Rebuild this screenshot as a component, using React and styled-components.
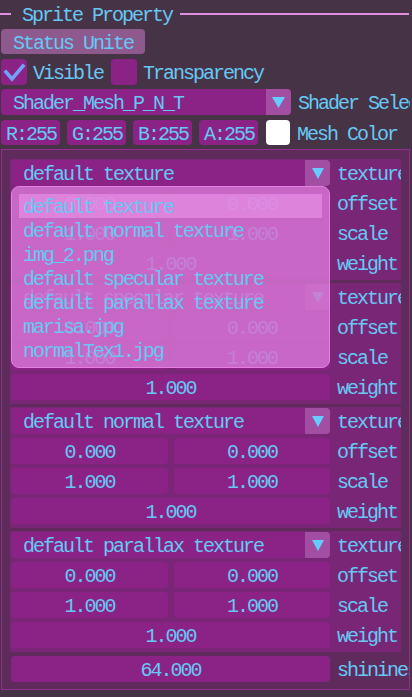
import React from 'react';
import styled, { createGlobalStyle } from 'styled-components';

const Global = createGlobalStyle`
  html, body {
    margin: 0;
    padding: 0;
    background: #463346;
  }
  body {
    font-family: "Liberation Mono", "DejaVu Sans Mono", monospace;
    font-size: 20px;
    letter-spacing: -2px;
    color: #66c8f4;
    line-height: 1;
  }
`;

const Window = styled.div`
  width: 410px;
  height: 697px;
  box-sizing: border-box;
  padding-left: 1px;
  overflow: hidden;
`;

const Separator = styled.div`
  display: flex;
  align-items: center;
  height: 27px;
  margin-left: -1px;
`;

const Line = styled.div`
  height: 2px;
  background: #e08ee0;
  width: ${(p) => (p.$grow ? 'auto' : `${p.$w}px`)};
  flex: ${(p) => (p.$grow ? 1 : 'none')};
  margin-right: ${(p) => (p.$grow ? '1px' : '0')};
`;

const Title = styled.span`
  margin: 0 8px 0 11px;
  padding-top: 4px;
  white-space: nowrap;
`;

const Button = styled.div`
  display: flex;
  align-items: center;
  width: 144px;
  height: 25px;
  margin-top: 2px;
  box-sizing: border-box;
  padding: 4px 0 0 12px;
  background: #8e5a8e;
  border-radius: 4px;
  white-space: nowrap;
`;

const Row = styled.div`
  display: flex;
  align-items: center;
  gap: ${(p) => p.$gap ?? 7}px;
  margin-top: ${(p) => p.$mt ?? 4}px;
  white-space: nowrap;
`;

const CheckBox = styled.div`
  flex: none;
  width: 26px;
  height: 26px;
  border-radius: 4px;
  background: #8b2387;
  margin-left: ${(p) => p.$ml ?? 0}px;
  display: flex;
`;

const Label = styled.span`
  white-space: nowrap;
  padding-top: 4px;
`;

const Combo = styled.div`
  flex: none;
  display: flex;
  align-items: stretch;
  width: ${(p) => p.$w}px;
  height: 26px;
  border-radius: 4px;
  background: #8b2387;
  overflow: hidden;
`;

const ComboText = styled.div`
  flex: 1;
  display: flex;
  align-items: center;
  padding: 4px 0 0 12px;
  white-space: nowrap;
  overflow: hidden;
`;

const ArrowBox = styled.div`
  flex: none;
  width: 25px;
  display: flex;
  align-items: center;
  justify-content: center;
  background: #a14ea3;
`;

const ColorField = styled.div`
  flex: none;
  width: 59px;
  height: 25px;
  box-sizing: border-box;
  padding: 4px 0 0 5px;
  display: flex;
  align-items: center;
  border-radius: 4px;
  background: #8b2387;
`;

const Swatch = styled.div`
  flex: none;
  width: 24px;
  height: 25px;
  margin-left: 1px;
  border-radius: 4px;
  background: #ffffff;
`;

const Child = styled.div`
  margin-top: 4px;
  width: 409px;
  box-sizing: border-box;
  border: 1px solid #93308f;
  background: #5f2b5d;
  padding: 9px 8px 7px 8px;
  display: flex;
  flex-direction: column;
  gap: 3px;
  overflow: hidden;
`;

const Group = styled.div`
  background: #7a2676;
  padding: 1px 0 4px 1px;
  display: flex;
  flex-direction: column;
  gap: 4px;
`;

const GroupRow = styled.div`
  display: grid;
  grid-template-columns: 319px ${(p) => (p.$free ? '80px' : '64px')};
  column-gap: 7px;
  align-items: center;
  margin-left: ${(p) => p.$ml ?? 0}px;
  margin-top: ${(p) => p.$mt ?? 0}px;
`;

const RowLabel = styled.div`
  overflow: hidden;
  white-space: nowrap;
  padding-top: 4px;
`;

const ComboWrap = styled.div`
  position: relative;
  width: 319px;
`;

const Pair = styled.div`
  display: grid;
  grid-template-columns: 157px 156px;
  column-gap: 6px;
`;

const Field = styled.div`
  height: 26px;
  box-sizing: border-box;
  padding-top: 4px;
  border-radius: 4px;
  background: #8b2387;
  display: flex;
  align-items: center;
  justify-content: center;
  white-space: nowrap;
`;

const Popup = styled.div`
  position: absolute;
  z-index: 10;
  top: 26px;
  left: 0;
  width: 319px;
  height: 182px;
  box-sizing: border-box;
  padding: 7px 7px 0 7px;
  border: 1px solid #e67ee6;
  border-radius: 8px;
  background: rgba(212, 115, 209, 0.85);
`;

const PopupItem = styled.div`
  height: 24px;
  box-sizing: border-box;
  display: flex;
  align-items: center;
  padding: 4px 0 0 4px;
  white-space: nowrap;
  background: ${(p) => (p.$active ? 'rgba(235, 150, 235, 0.6)' : 'transparent')};
`;

const Check = () => (
  <svg width="26" height="26" viewBox="0 0 26 26">
    <polyline points="5,13 11,20 22,7" fill="none" stroke="#72a2f8" strokeWidth="3.6" strokeLinecap="square" />
  </svg>
);

const Arrow = ({ w = 13 }) => (
  <svg width={w} height="11" viewBox={`0 0 ${w} 11`}>
    <polygon points={`0,0 ${w},0 ${w / 2},11`} fill="#66ccff" />
  </svg>
);

const textureOptions = [
  'default texture',
  'default normal texture',
  'img_2.png',
  'default specular texture',
  'default parallax texture',
  'marisa.jpg',
  'normalTex1.jpg',
];

const groups = [
  'default texture',
  'default specular texture',
  'default normal texture',
  'default parallax texture',
];

const TexGroup = ({ name, open }) => (
  <Group>
    <GroupRow>
      <ComboWrap>
        <Combo $w={319}>
          <ComboText>{name}</ComboText>
          <ArrowBox>
            <Arrow w={12} />
          </ArrowBox>
        </Combo>
        {open && (
          <Popup>
            {textureOptions.map((t, i) => (
              <PopupItem key={t} $active={i === 0}>
                {t}
              </PopupItem>
            ))}
          </Popup>
        )}
      </ComboWrap>
      <RowLabel>texture</RowLabel>
    </GroupRow>
    <GroupRow>
      <Pair>
        <Field>0.000</Field>
        <Field>0.000</Field>
      </Pair>
      <RowLabel>offset</RowLabel>
    </GroupRow>
    <GroupRow>
      <Pair>
        <Field>1.000</Field>
        <Field>1.000</Field>
      </Pair>
      <RowLabel>scale</RowLabel>
    </GroupRow>
    <GroupRow>
      <Field>1.000</Field>
      <RowLabel>weight</RowLabel>
    </GroupRow>
  </Group>
);

export default function App() {
  return (
    <>
      <Global />
      <Window>
        <Separator>
          <Line $w={11} />
          <Title>Sprite Property</Title>
          <Line $grow />
        </Separator>
        <Button>Status Unite</Button>
        <Row $mt={5} $gap={6}>
          <CheckBox>
            <Check />
          </CheckBox>
          <Label>Visible</Label>
          <CheckBox $ml={2} />
          <Label>Transparency</Label>
        </Row>
        <Row $mt={4}>
          <Combo $w={290}>
            <ComboText>Shader_Mesh_P_N_T</ComboText>
            <ArrowBox>
              <Arrow />
            </ArrowBox>
          </Combo>
          <Label>Shader Select</Label>
        </Row>
        <Row $mt={5}>
          <ColorField>R:255</ColorField>
          <ColorField>G:255</ColorField>
          <ColorField>B:255</ColorField>
          <ColorField>A:255</ColorField>
          <Swatch />
          <Label>Mesh Color</Label>
        </Row>
        <Child>
          {groups.map((g, i) => (
            <TexGroup key={g} name={g} open={i === 0} />
          ))}
          <GroupRow $ml={1} $mt={1} $free>
            <Field>64.000</Field>
            <RowLabel>shininess</RowLabel>
          </GroupRow>
        </Child>
      </Window>
    </>
  );
}
